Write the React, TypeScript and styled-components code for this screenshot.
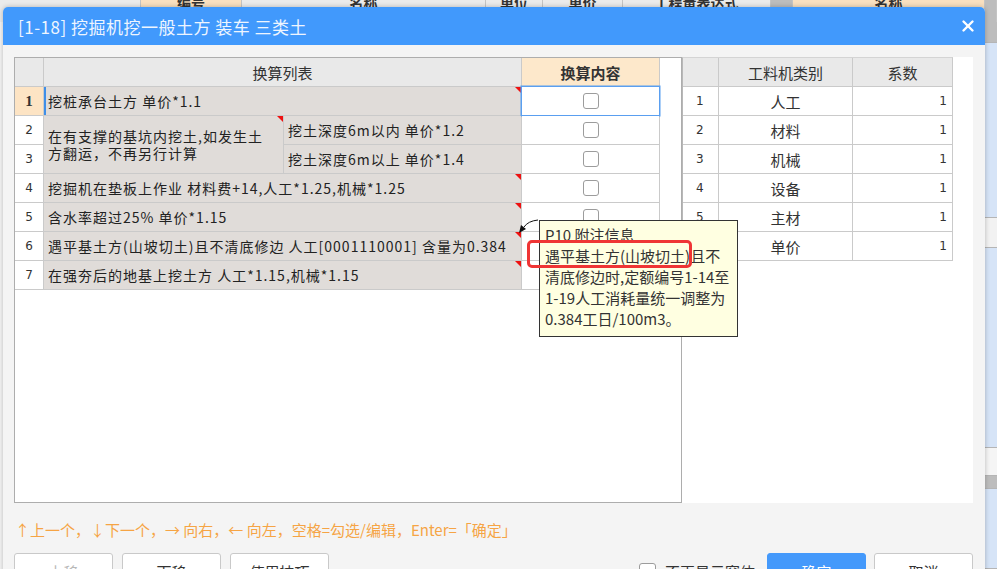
import { Fragment } from "react";
import styled, { createGlobalStyle } from "styled-components";
import { X } from "lucide-react";

const GlobalStyle = createGlobalStyle`
  html, body {
    margin: 0;
    padding: 0;
  }
  body {
    font-family: "Noto Sans CJK SC", "Noto Sans", sans-serif;
    background: #f2f2f2;
  }
`;

const Page = styled.div`
  position: relative;
  width: 997px;
  height: 569px;
  overflow: hidden;
  background: #f4f4f4;
`;

/* application behind the dialog */
const AppHeader = styled.div`
  display: flex;
  height: 22px;
  background: #e8e8e8;
`;

const AppHeadCell = styled.div<{ $w: number; $tone?: "orange" | "dark" }>`
  width: ${(p) => p.$w}px;
  flex-shrink: 0;
  box-sizing: border-box;
  border-right: 1px solid #c4c4c4;
  background: ${(p) =>
    p.$tone === "orange" ? "#f9e0c0" : p.$tone === "dark" ? "#bdbdbd" : "#ebebeb"};
  font-size: 14px;
  font-weight: bold;
  line-height: 4px;
  text-align: center;
  color: #333;
`;

const AppBody = styled.div`
  display: flex;
  height: 547px;
`;

const AppLeft = styled.div`
  flex: 1;
  background: #f5f5f5;
`;

const AppRight = styled.div`
  width: 12px;
  display: flex;
  flex-direction: column;
  background: #d6e4f7;
`;

const AppBand = styled.div<{ $h: number; $c: string }>`
  height: ${(p) => p.$h}px;
  background: ${(p) => p.$c};
  border-bottom: 1px solid #b5b5b5;
`;

/* dialog */
const Dialog = styled.div`
  position: absolute;
  left: 3px;
  top: 7px;
  width: 982px;
  height: 620px;
  display: flex;
  flex-direction: column;
  background: #f4f4f4;
  border-radius: 5px 5px 0 0;
  box-shadow: 0 0 5px rgba(0, 0, 0, 0.25);
`;

const TitleBar = styled.div`
  height: 38px;
  flex-shrink: 0;
  display: flex;
  align-items: center;
  justify-content: space-between;
  padding: 0 8px 0 15px;
  background: #4199fc;
  border-radius: 5px 5px 0 0;
  color: #fff;
`;

const Title = styled.div`
  font-size: 17px;
  letter-spacing: 0.5px;
  color: #eef5ff;
`;

const Body = styled.div`
  display: flex;
  flex-direction: column;
  padding: 12px 12px 0 11px;
`;

const Panels = styled.div`
  display: flex;
  height: 446px;
`;

const LeftPanel = styled.div`
  width: 668px;
  box-sizing: border-box;
  border: 1px solid #adadad;
  background: #fff;
`;

const RightPanel = styled.div`
  width: 291px;
  background: #fff;
`;

const Grid = styled.div<{ $cols: string; $edge?: boolean }>`
  display: grid;
  grid-template-columns: ${(p) => p.$cols};
  grid-auto-rows: 28px;
  gap: 1px;
  width: fit-content;
  background: #cacaca;
  border: 1px solid #cacaca;
  border-left: ${(p) => (p.$edge ? "1px solid #b8b8b8" : "none")};
  border-top: ${(p) => (p.$edge ? "1px solid #d4d4d4" : "none")};
  color: #222;
`;

const HeadCell = styled.div<{ $accent?: boolean; $span?: number }>`
  grid-column: span ${(p) => p.$span ?? 1};
  display: flex;
  align-items: center;
  justify-content: center;
  background: ${(p) => (p.$accent ? "#fde8cb" : "#e9e9e9")};
  font-size: 15px;
  font-weight: ${(p) => (p.$accent ? "bold" : "normal")};
  color: #333;
`;

const NumCell = styled.div<{ $active?: boolean; $align?: "left" | "center" }>`
  display: flex;
  align-items: center;
  justify-content: ${(p) => (p.$align === "left" ? "flex-start" : "center")};
  padding-left: ${(p) => (p.$align === "left" ? "13px" : "0")};
  background: ${(p) => (p.$active ? "#fde4c4" : "#fff")};
  font-family: ${(p) =>
    p.$active ? '"Liberation Serif", serif' : '"DejaVu Sans", sans-serif'};
  font-size: ${(p) => (p.$active ? "15px" : "12px")};
  font-weight: ${(p) => (p.$active ? "bold" : "normal")};
  color: #333;
`;

const NameCell = styled.div<{
  $span?: number;
  $rows?: number;
  $marked?: boolean;
  $selected?: boolean;
}>`
  position: relative;
  grid-column: span ${(p) => p.$span ?? 1};
  grid-row: span ${(p) => p.$rows ?? 1};
  display: flex;
  align-items: center;
  padding-left: 4px;
  background: #e0dcd9;
  font-size: 14px;
  letter-spacing: 1px;
  line-height: 17px;
  white-space: nowrap;
  box-shadow: ${(p) => (p.$selected ? "inset 2px 0 0 #3f8fe8" : "none")};

  &::after {
    content: "";
    display: ${(p) => (p.$marked ? "block" : "none")};
    position: absolute;
    top: 0;
    right: 0;
    border-top: 6px solid #ee1111;
    border-left: 6px solid transparent;
  }
`;

const CheckCell = styled.div<{ $focus?: boolean }>`
  display: flex;
  align-items: center;
  justify-content: center;
  background: #fff;
  box-shadow: ${(p) => (p.$focus ? "0 0 0 1.5px #5a9ff0" : "none")};
  position: relative;
`;

const Box = styled.span<{ $size?: number }>`
  width: ${(p) => p.$size ?? 16}px;
  height: ${(p) => p.$size ?? 16}px;
  box-sizing: border-box;
  border: 1px solid #9c9c9c;
  border-radius: 3px;
  background: #fff;
  flex-shrink: 0;
`;

const TextCell = styled.div<{ $align: "center" | "right" }>`
  display: flex;
  align-items: center;
  justify-content: ${(p) => (p.$align === "right" ? "flex-end" : "center")};
  padding-right: ${(p) => (p.$align === "right" ? "5px" : "0")};
  background: #fff;
  font-family: ${(p) =>
    p.$align === "right" ? '"DejaVu Sans", sans-serif' : "inherit"};
  font-size: ${(p) => (p.$align === "right" ? "12px" : "15px")};
  color: #333;
`;

const Hint = styled.div`
  margin-top: 17px;
  padding-left: 1px;
  font-size: 15px;
  line-height: 20px;
  color: #f6a444;
`;

const Footer = styled.div`
  display: flex;
  align-items: center;
  justify-content: space-between;
  margin-top: 13px;
`;

const ButtonGroup = styled.div<{ $gap: number }>`
  display: flex;
  align-items: center;
  gap: ${(p) => p.$gap}px;
`;

const Button = styled.button<{ $primary?: boolean; $disabled?: boolean }>`
  width: 99px;
  height: 36px;
  border: 1px solid ${(p) => (p.$primary ? "#4499fb" : "#c9c9c9")};
  border-radius: 3px;
  background: ${(p) => (p.$primary ? "#4499fb" : "#fff")};
  color: ${(p) => (p.$primary ? "#fff" : p.$disabled ? "#b8b8b8" : "#333")};
  font-family: inherit;
  font-size: 15px;
  padding: 0;
`;

const CheckLabel = styled.label`
  display: flex;
  align-items: center;
  gap: 9px;
  margin-right: 4px;
  font-size: 15px;
  color: #333;
`;

/* overlays */
const Tooltip = styled.div`
  position: absolute;
  left: 539px;
  top: 220px;
  width: 199px;
  height: 117px;
  box-sizing: border-box;
  padding: 3px 4px 0 5px;
  border: 1px solid #333;
  background: #ffffe1;
  font-size: 15px;
  line-height: 21px;
  color: #333;
  white-space: nowrap;
  overflow: hidden;
`;

const Highlight = styled.div`
  position: absolute;
  left: 527px;
  top: 240px;
  width: 165px;
  height: 28px;
  box-sizing: border-box;
  border: 3px solid #ef3535;
  border-radius: 5px;
`;

const Pointer = styled.svg`
  position: absolute;
  left: 512px;
  top: 215px;
`;

const leftRows = [
  { n: 4, text: "挖掘机在垫板上作业 材料费+14,人工*1.25,机械*1.25" },
  { n: 5, text: "含水率超过25% 单价*1.15" },
  { n: 6, text: "遇平基土方(山坡切土)且不清底修边 人工[0001110001] 含量为0.384" },
  { n: 7, text: "在强夯后的地基上挖土方 人工*1.15,机械*1.15" },
];

const categories = ["人工", "材料", "机械", "设备", "主材", "单价"];

export default function App() {
  return (
    <Page>
      <GlobalStyle />
      <AppHeader>
        <AppHeadCell $w={141}> </AppHeadCell>
        <AppHeadCell $w={101} $tone="orange">编号</AppHeadCell>
        <AppHeadCell $w={244}>名称</AppHeadCell>
        <AppHeadCell $w={57}>单位</AppHeadCell>
        <AppHeadCell $w={80}>单价</AppHeadCell>
        <AppHeadCell $w={148}>工程量表达式</AppHeadCell>
        <AppHeadCell $w={22} $tone="dark"> </AppHeadCell>
        <AppHeadCell $w={192} $tone="orange">名称</AppHeadCell>
        <AppHeadCell $w={12} $tone="dark"> </AppHeadCell>
      </AppHeader>
      <AppBody>
        <AppLeft />
        <AppRight>
          <AppBand $h={20} $c="#bdbdbd" />
          <AppBand $h={175} $c="#d6e4f7" />
          <AppBand $h={30} $c="#f2f2f2" />
          <AppBand $h={200} $c="#d6e4f7" />
          <AppBand $h={27} $c="#f5f5f5" />
          <AppBand $h={12} $c="#bdbdbd" />
          <AppBand $h={80} $c="#d6e4f7" />
        </AppRight>
      </AppBody>

      <Dialog>
        <TitleBar>
          <Title>[1-18] 挖掘机挖一般土方 装车 三类土</Title>
          <X size={18} strokeWidth={3.2} color="#fff" />
        </TitleBar>
        <Body>
          <Panels>
            <LeftPanel>
              <Grid $cols="28px 239px 237px 137px">
                <HeadCell />
                <HeadCell $span={2}>换算列表</HeadCell>
                <HeadCell $accent>换算内容</HeadCell>

                <NumCell $active>1</NumCell>
                <NameCell $span={2} $marked $selected>
                  挖桩承台土方 单价*1.1
                </NameCell>
                <CheckCell $focus>
                  <Box />
                </CheckCell>

                <NumCell>2</NumCell>
                <NameCell $rows={2} $marked>
                  <span>
                    在有支撑的基坑内挖土,如发生土
                    <br />
                    方翻运，不再另行计算
                  </span>
                </NameCell>
                <NameCell>挖土深度6m以内 单价*1.2</NameCell>
                <CheckCell>
                  <Box />
                </CheckCell>

                <NumCell>3</NumCell>
                <NameCell>挖土深度6m以上 单价*1.4</NameCell>
                <CheckCell>
                  <Box />
                </CheckCell>

                {leftRows.map((r) => (
                  <Fragment key={r.n}>
                    <NumCell>{r.n}</NumCell>
                    <NameCell $span={2} $marked>
                      {r.text}
                    </NameCell>
                    <CheckCell>
                      <Box />
                    </CheckCell>
                  </Fragment>
                ))}
              </Grid>
            </LeftPanel>
            <RightPanel>
              <Grid $cols="35px 133px 99px" $edge>
                <HeadCell />
                <HeadCell>工料机类别</HeadCell>
                <HeadCell>系数</HeadCell>
                {categories.map((c, i) => (
                  <Fragment key={c}>
                    <NumCell $align="left">{i + 1}</NumCell>
                    <TextCell $align="center">{c}</TextCell>
                    <TextCell $align="right">1</TextCell>
                  </Fragment>
                ))}
              </Grid>
            </RightPanel>
          </Panels>

          <Hint>↑上一个，↓下一个，→ 向右，← 向左，空格=勾选/编辑，Enter=「确定」</Hint>

          <Footer>
            <ButtonGroup $gap={9}>
              <Button $disabled>上移</Button>
              <Button>下移</Button>
              <Button>使用技巧</Button>
            </ButtonGroup>
            <ButtonGroup $gap={8}>
              <CheckLabel>
                <Box $size={17} />
                不再显示窗体
              </CheckLabel>
              <Button $primary>确定</Button>
              <Button>取消</Button>
            </ButtonGroup>
          </Footer>
        </Body>
      </Dialog>

      <Pointer width="30" height="24" viewBox="0 0 30 24">
        <path d="M26 5 Q16 6 12 12" fill="none" stroke="#111" strokeWidth="1" />
        <polygon points="7,18 9,10 14,14" fill="#111" />
      </Pointer>
      <Tooltip>
        P10 附注信息
        <br />
        遇平基土方(山坡切土)且不
        <br />
        清底修边时,定额编号1-14至
        <br />
        1-19人工消耗量统一调整为
        <br />
        0.384工日/100m3。
      </Tooltip>
      <Highlight />
    </Page>
  );
}
